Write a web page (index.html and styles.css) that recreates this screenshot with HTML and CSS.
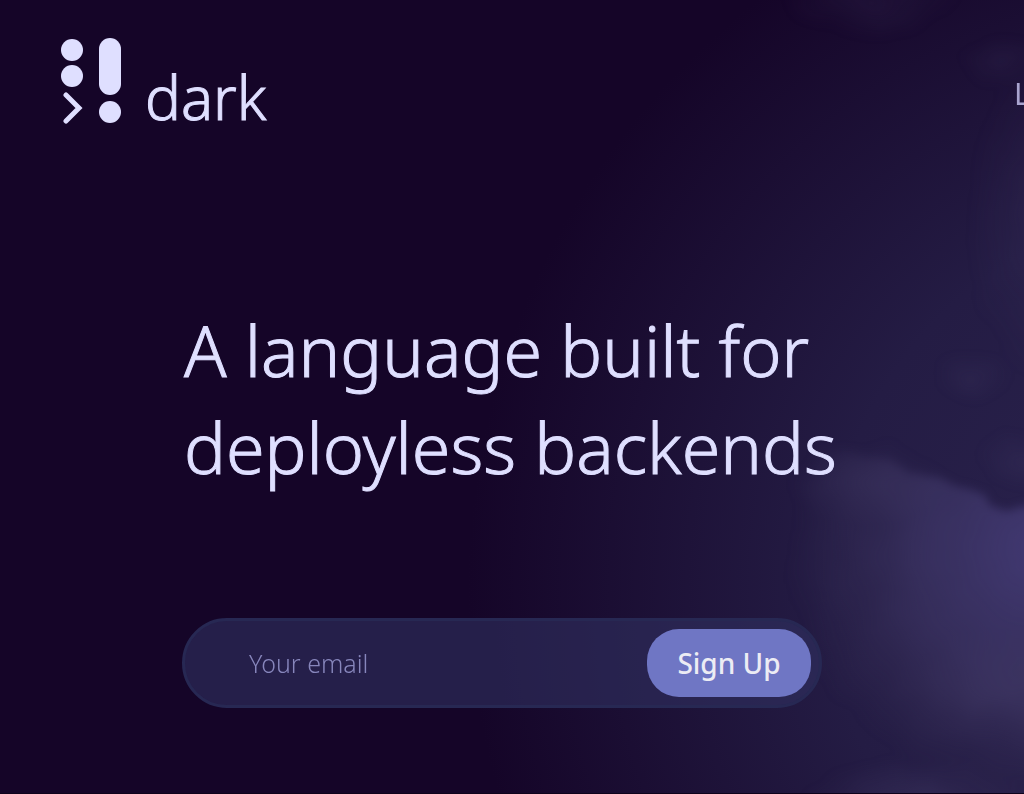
FILE: index.html
```html
<!DOCTYPE html>
<html lang="en">
<head>
  <meta charset="UTF-8">
  <title>dark</title>
  <link rel="stylesheet" href="styles.css">
</head>
<body>
  <div class="page">
    <!-- night sky -->
    <svg class="clouds" viewBox="0 0 1024 794" preserveAspectRatio="xMaxYMin slice" aria-hidden="true">
      <defs>
        <filter id="edge" filterUnits="userSpaceOnUse" x="700" y="-60" width="400" height="920" color-interpolation-filters="sRGB">
          <feTurbulence type="fractalNoise" baseFrequency="0.02" numOctaves="4" seed="4" result="n"/>
          <feDisplacementMap in="SourceGraphic" in2="n" scale="24" xChannelSelector="R" yChannelSelector="G"/>
          <feGaussianBlur stdDeviation="5"/>
        </filter>
        <radialGradient id="glow" gradientUnits="userSpaceOnUse" cx="1040" cy="550" r="250">
          <stop offset="0" stop-color="#4a4180" stop-opacity="0.75"/>
          <stop offset="0.5" stop-color="#463e70" stop-opacity="0.5"/>
          <stop offset="1" stop-color="#40385c" stop-opacity="0"/>
        </radialGradient>
        <radialGradient id="puff">
          <stop offset="0" stop-color="#4c4470" stop-opacity="0.45"/>
          <stop offset="1" stop-color="#4c4470" stop-opacity="0"/>
        </radialGradient>
      </defs>
      <g filter="url(#edge)">
        <path fill="url(#glow)" d="M770 446 Q860 448 910 468 Q960 480 990 506 L1090 510 V850 H770Z"/>
        <ellipse cx="870" cy="484" rx="80" ry="40" fill="url(#puff)" opacity="0.5"/>
        <ellipse cx="1010" cy="690" rx="120" ry="60" fill="url(#puff)" opacity="0.6"/>
        <ellipse cx="920" cy="800" rx="120" ry="40" fill="url(#puff)" opacity="0.7"/>
        <ellipse cx="870" cy="0" rx="90" ry="36" fill="url(#puff)" opacity="0.35"/>
        <ellipse cx="975" cy="376" rx="40" ry="22" fill="url(#puff)" opacity="0.35"/>
        <ellipse cx="1020" cy="460" rx="44" ry="26" fill="url(#puff)" opacity="0.4"/>
        <ellipse cx="1000" cy="60" rx="40" ry="26" fill="url(#puff)" opacity="0.3"/>
        <ellipse cx="1040" cy="220" rx="70" ry="160" fill="url(#puff)" opacity="0.4"/>
      </g>
    </svg>

    <header class="header">
      <a class="logo" href="#">
        <svg class="logo-mark" viewBox="0 0 60 86" width="60" height="86" aria-hidden="true">
          <circle cx="11" cy="12" r="11"/>
          <circle cx="11" cy="38" r="11"/>
          <rect x="38" y="0" width="22" height="57" rx="11"/>
          <circle cx="49" cy="74" r="11"/>
          <path d="M5 57 L18 70 L5 83" fill="none" stroke="#dfdfff" stroke-width="5" stroke-linecap="round"/>
        </svg>
        <span class="logo-name">dark</span>
      </a>
      <nav class="nav">
        <a href="#">L</a>
      </nav>
    </header>

    <main class="hero">
      <h1>A language built for deployless backends</h1>
      <form class="signup">
        <input type="email" placeholder="Your email" aria-label="Your email">
        <button type="button">Sign Up</button>
      </form>
    </main>
  </div>
</body>
</html>
```
FILE: styles.css
```css
* {
  box-sizing: border-box;
}
body {
  margin: 0;
  background: #150528;
  color: #dfdfff;
  font-family: "Noto Sans", sans-serif;
  font-weight: 300;
}
.page {
  position: relative;
  min-height: 100vh;
  overflow: hidden;
  background: radial-gradient(circle at 118% 74%, #2b244f 0, #241c44 380px, #150528 740px);
  border-bottom: 1px solid #0e031c;
}
/* sits behind the whole page */
.clouds {
  position: absolute;
  inset: 0;
  width: 100%;
  height: 100%;
}
.header,
.hero {
  position: relative;
}
.header {
  display: flex;
  justify-content: space-between;
  align-items: flex-end;
  padding: 38px 0 0 61px;
}
.logo {
  display: flex;
  align-items: flex-end;
  gap: 24px;
  color: #dfdfff;
  text-decoration: none;
}
.logo-mark {
  fill: #dfdfff;
}
.logo-name {
  font-size: 60px;
  line-height: 54px;
  -webkit-text-stroke: 1px #dfdfff;
}
.nav {
  width: 10px;
  padding-bottom: 10px;
}
.nav a {
  color: #a9a4cf;
  font-size: 30px;
  font-weight: 400;
  text-decoration: none;
}
.hero {
  padding: 178px 160px 80px 182px;
}
h1 {
  margin: 0;
  padding-left: 2px;
  font-size: 70px;
  line-height: 97px;
  font-weight: 300;
  -webkit-text-stroke: 1px #dfdfff;
}
.signup {
  display: flex;
  max-width: 640px;
  margin-top: 122px;
  padding: 8px;
  border: 3px solid #272853;
  border-radius: 45px;
  background: rgba(48, 48, 96, 0.6);
}
.signup input {
  flex: 1;
  min-width: 0;
  padding: 0 0 0 56px;
  border: 0;
  outline: 0;
  background: none;
  color: #dfdfff;
  font: inherit;
  font-size: 25px;
}
.signup input::placeholder {
  color: #8786bc;
}
.signup button {
  width: 164px;
  height: 68px;
  border: 0;
  border-radius: 32px;
  background: #6f76c4;
  color: #ececf4;
  font: inherit;
  font-size: 28px;
  font-weight: 500;
}
```
